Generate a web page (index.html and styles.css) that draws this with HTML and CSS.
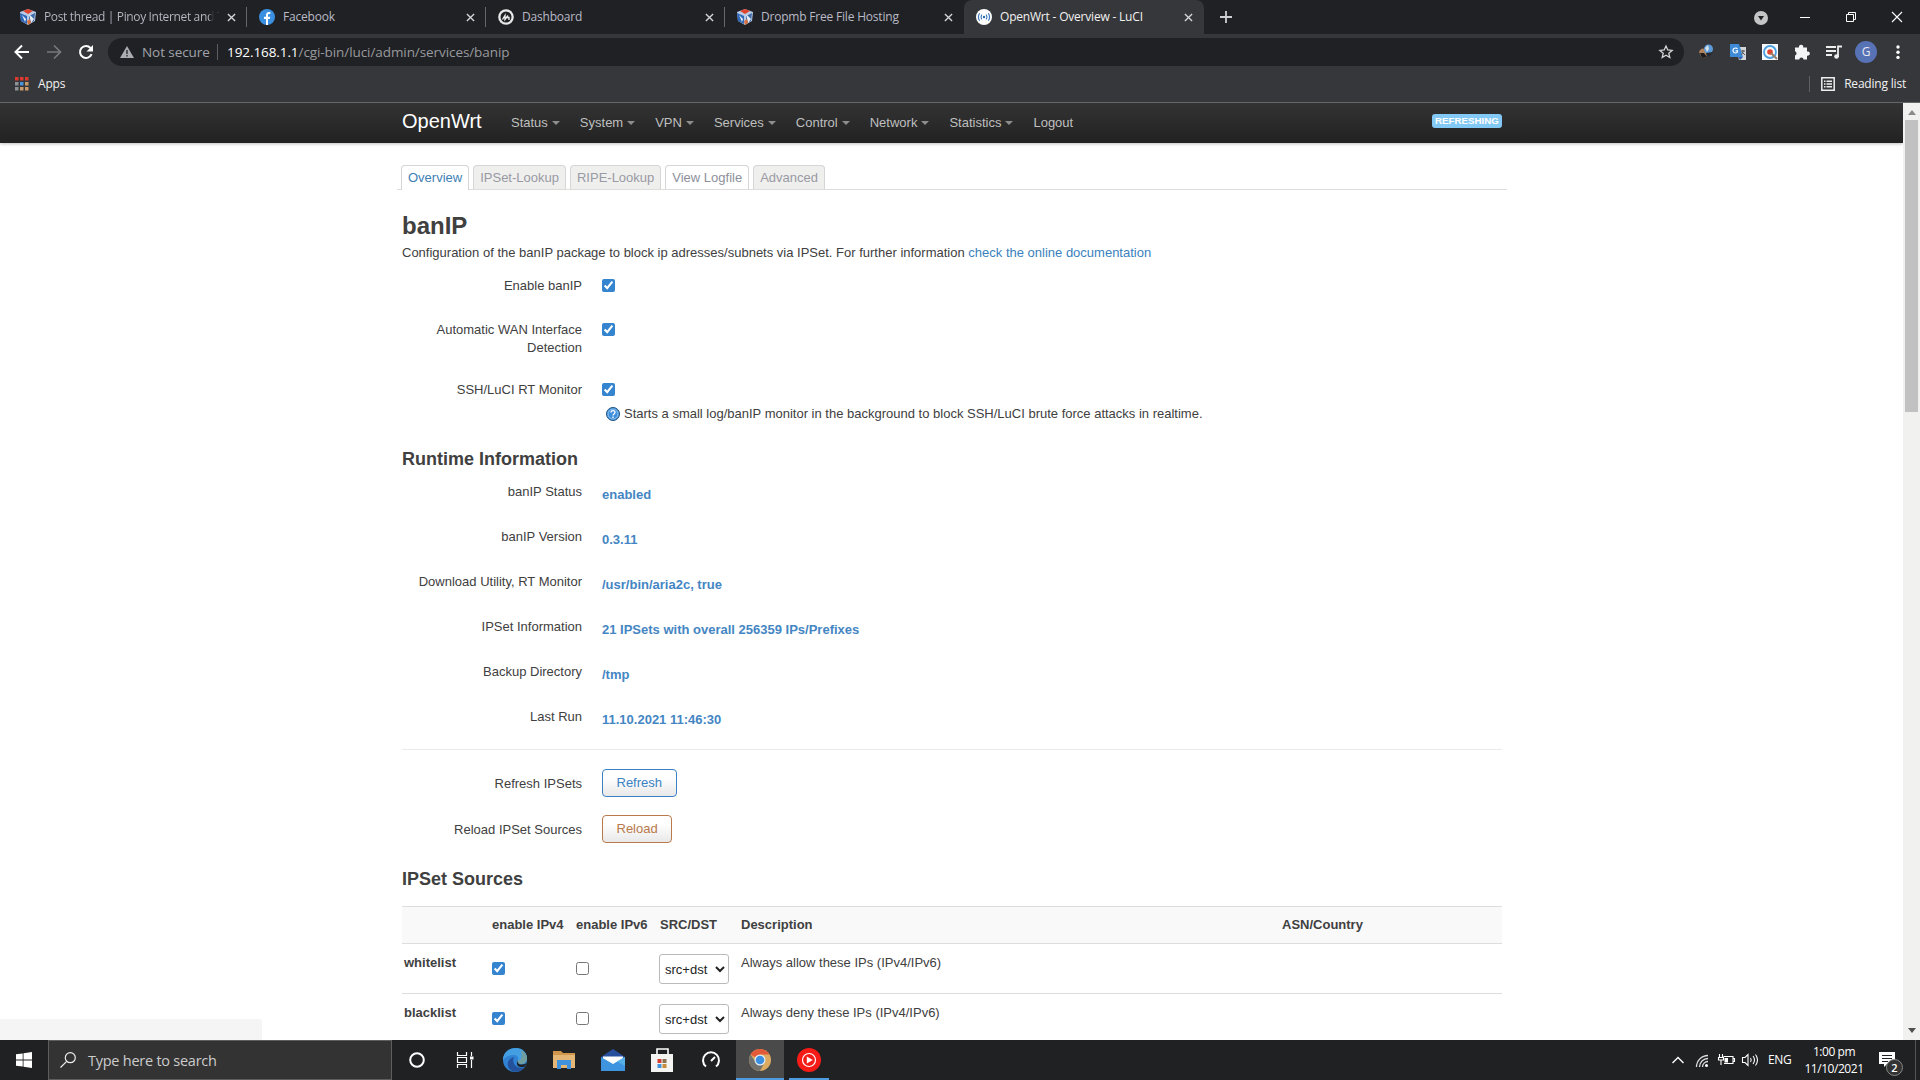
FILE: index.html
```html
<!DOCTYPE html>
<html lang="en">
<head>
    <meta charset="UTF-8">
    <title>OpenWrt - Overview - LuCI</title>
    <link rel="stylesheet" href="styles.css">
</head>
<body>
    <svg width="0" height="0" class="defs">
        <symbol id="x" viewBox="0 0 10 10"><path d="M1 1l8 8M9 1l-8 8" stroke="currentColor" stroke-width="1.5" fill="none"/></symbol>
        <symbol id="cube" viewBox="0 0 16 16">
            <path d="M8 0l8 3-1 9-7 4-7-4-1-9z" fill="#b9cbe6"/>
            <path d="M3 2l5-2 5 2-5 3z" fill="#e2432c"/>
            <path d="M0 4l7 3v8l-6-3z" fill="#2e68b8"/>
            <path d="M9 7l6-3-1 8-5 3z" fill="#3d6ca9"/>
            <path d="M2 6l4 4-1 3zM9 5l5 5-3 4z" fill="#e8eef5"/>
            <path d="M7 12l3-2 1 4-3 2z" fill="#d9713f"/>
        </symbol>
    </svg>

    <div class="tabstrip">
        <div class="tab">
            <svg class="favicon"><use href="#cube"/></svg>
            <span class="tab-title faded">Post thread | Pinoy Internet and T</span>
            <svg class="close"><use href="#x"/></svg>
        </div>
        <div class="tab">
            <svg class="favicon" viewBox="0 0 16 16"><circle cx="8" cy="8" r="8" fill="#3b8fe0"/><path d="M7 16v-6H5V7.700h2V6c0-2 1.200-3 3-3l1.300.1v2h-1C9.300 5.100 9 5.600 9 6.300v1.400h2.200L10.900 10H9v6z" fill="#fff"/></svg>
            <span class="tab-title">Facebook</span>
            <svg class="close"><use href="#x"/></svg>
        </div>
        <div class="tab">
            <svg class="favicon" viewBox="0 0 16 16"><circle cx="8" cy="8" r="7.800" fill="#e8e8e8"/><circle cx="8" cy="8" r="5.500" fill="#202124"/><path d="M4.500 10.500l2.500-4v4l3-4M8.500 8.500h2.500V11" stroke="#eee" stroke-width="1.400" fill="none"/></svg>
            <span class="tab-title">Dashboard</span>
            <svg class="close"><use href="#x"/></svg>
        </div>
        <div class="tab last">
            <svg class="favicon"><use href="#cube"/></svg>
            <span class="tab-title">Dropmb Free File Hosting</span>
            <svg class="close"><use href="#x"/></svg>
        </div>
        <div class="tab active">
            <svg class="favicon" viewBox="0 0 16 16"><circle cx="8" cy="8" r="8" fill="#fff"/><circle cx="8" cy="8" r="1.200" fill="#2c6aa8"/><path d="M5.800 5.500q-1.600 2.500 0 5M10.200 5.500q1.600 2.500 0 5M3.600 4.200q-2.400 3.800 0 7.600M12.400 4.200q2.400 3.800 0 7.600" stroke="#3f7cc0" stroke-width="1.200" fill="none"/></svg>
            <span class="tab-title">OpenWrt - Overview - LuCI</span>
            <svg class="close"><use href="#x"/></svg>
        </div>
        <svg class="new-tab" viewBox="0 0 12 12"><path d="M6 0v12M0 6h12" stroke="#d0d0d2" stroke-width="1.800"/></svg>
        <div class="window-buttons">
            <svg class="tab-search" viewBox="0 0 14 14"><circle cx="7" cy="7" r="7" fill="#c4c5c7"/><path d="M4 5h6L7 9.500z" fill="#202124"/></svg>
            <svg viewBox="0 0 10 10"><path d="M0 5.500h10" stroke="#fff"/></svg>
            <svg viewBox="0 0 10 10"><path d="M.5 2.500h7v7h-7zM2.500 2.500v-2h7v7h-2" stroke="#fff" fill="none"/></svg>
            <svg viewBox="0 0 10 10"><path d="M0 0l10 10M10 0L0 10" stroke="#fff" stroke-width="1.100"/></svg>
        </div>
    </div>

    <div class="toolbar">
        <div class="nav-buttons">
            <svg viewBox="0 0 16 16"><path d="M15 8H2M8 1.500L1.500 8 8 14.500" stroke="#fff" stroke-width="2" fill="none"/></svg>
            <svg viewBox="0 0 16 16"><path d="M1 8h13M8 1.500L14.500 8 8 14.500" stroke="#77797c" stroke-width="1.700" fill="none"/></svg>
            <svg viewBox="0 0 16 16"><path d="M13.600 10.200A6 6 0 1 1 12.500 4" stroke="#fff" stroke-width="2" fill="none"/><path d="M15 1v6.500H8.500z" fill="#fff"/></svg>
        </div>
        <div class="omnibox">
            <svg class="warning" viewBox="0 0 14 12"><path d="M7 0l7 12H0z" fill="#a9acb1"/><path d="M7 4v4M7 9v1.500" stroke="#202124" stroke-width="1.300"/></svg>
            <span class="not-secure">Not secure</span>
            <span class="url"><b>192.168.1.1</b>/cgi-bin/luci/admin/services/banip</span>
            <svg class="star" viewBox="0 0 14 14"><path d="M7 1l1.800 4 4.300.4-3.300 2.900 1 4.200L7 10.300l-3.800 2.200 1-4.200L.9 5.400 5.200 5z" stroke="#d5d6d8" stroke-width="1.300" fill="none"/></svg>
        </div>
        <div class="extensions">
            <svg viewBox="0 0 16 16"><path d="M1 8q2-5 6-3l4 5-2 3-5 1z" fill="#b1825a"/><path d="M2 9l4 0 3 4-5 1z" fill="#1c1c1e"/><circle cx="10.500" cy="5" r="4.500" fill="#5c9bd8"/><path d="M7 4l3-3 1 4-2 3z" fill="#d4e1ea"/><path d="M8 9l7-1-2 3-4 2z" fill="#262b33"/></svg>
            <svg viewBox="0 0 16 16"><path d="M6 3h10v13H9z" fill="#d2d5d8"/><path d="M0 0h9l4 13H0z" fill="#3d8ad8"/><path d="M8.500 13H13l-3 3z" fill="#2c5da8"/><path d="M7.500 5A2.500 2.500 0 1 0 7.500 8V6.800H5.500" stroke="#fff" stroke-width="1.200" fill="none"/><path d="M11 7h4M13 6v1c0 2-1 3-2 4M12 8l3 3" stroke="#555" fill="none"/></svg>
            <svg viewBox="0 0 16 16"><path d="M0 0h16v16H0z" fill="#f5f9fc"/><circle cx="8" cy="8" r="6" fill="none" stroke="#4b9fe0" stroke-width="1.800"/><circle cx="8" cy="8" r="2.800" fill="#df4430"/><path d="M9 9l6 6" stroke="#9b7b61" stroke-width="2"/></svg>
            <svg viewBox="0 0 16 16"><path d="M1 3.500h4a2.200 2.200 0 1 1 4.200 0H13v4a2.200 2.200 0 1 1 0 4.200V15.500H9.500a2 2 0 0 0-4.200 0H1v-4a2.200 2.200 0 0 0 0-4.200z" fill="#f4f5f6"/></svg>
            <svg viewBox="0 0 16 16"><path d="M0 3h10M0 7h10M0 11h6" stroke="#eee" stroke-width="1.800"/><path d="M12 13V2.500h4" stroke="#eee" stroke-width="1.800" fill="none"/><circle cx="10.500" cy="12.500" r="2.300" fill="#eee"/></svg>
            <span class="avatar">G</span>
            <svg viewBox="0 0 16 16"><circle cx="8" cy="3" r="1.700" fill="#fff"/><circle cx="8" cy="8.200" r="1.700" fill="#fff"/><circle cx="8" cy="13.400" r="1.700" fill="#fff"/></svg>
        </div>
    </div>

    <div class="bookmarks">
        <svg class="apps-icon" viewBox="0 0 14 14"><path d="M0 0h3.500v3.500H0zM5 0h3.500v3.500H5zM10 0h3.500v3.500H10z" fill="#dc3a2f"/><path d="M0 5h3.500v3.500H0zM0 10h3.500v3.500H0z" fill="#8d9296"/><path d="M5 5h3.500v3.500H5z" fill="#4a94dc"/><path d="M10 5h3.500v3.500H10zM5 10h3.500v3.500H5zM10 10h3.500v3.500H10z" fill="#c99a6a"/></svg>
        <span class="apps-label">Apps</span>
        <div class="reading-list">
            <svg viewBox="0 0 14 14"><path d="M.8.8h12.400v12.400H.8z" stroke="#eee" stroke-width="1.500" fill="none"/><path d="M3 4.200h1.500M3 7h1.500M3 9.800h1.500M5.500 4.200H11M5.500 7H11M5.500 9.800H11" stroke="#eee" stroke-width="1.600"/></svg>
            <span>Reading list</span>
        </div>
    </div>

    <div class="viewport">
        <div class="page">
            <header>
                <div class="container">
                    <a class="brand">OpenWrt</a>
                    <ul class="nav">
                        <li class="dropdown">Status</li>
                        <li class="dropdown">System</li>
                        <li class="dropdown">VPN</li>
                        <li class="dropdown">Services</li>
                        <li class="dropdown">Control</li>
                        <li class="dropdown">Network</li>
                        <li class="dropdown">Statistics</li>
                        <li>Logout</li>
                    </ul>
                    <span class="indicator">REFRESHING</span>
                </div>
            </header>

            <div class="container main">
                <ul class="page-tabs">
                    <li class="current">Overview</li>
                    <li>IPSet-Lookup</li>
                    <li>RIPE-Lookup</li>
                    <li class="hover">View Logfile</li>
                    <li>Advanced</li>
                </ul>

                <h2>banIP</h2>
                <p>Configuration of the banIP package to block ip adresses/subnets via IPSet. For further information <a class="link">check the online documentation</a></p>

                <div class="section options">
                    <div class="field">
                        <label>Enable banIP</label>
                        <div><input type="checkbox" checked></div>
                    </div>
                    <div class="field double">
                        <label>Automatic WAN Interface Detection</label>
                        <div><input type="checkbox" checked></div>
                    </div>
                    <div class="field last">
                        <label>SSH/LuCI RT Monitor</label>
                        <div>
                            <input type="checkbox" checked>
                            <div class="help">
                                <svg viewBox="0 0 14 14"><circle cx="7" cy="7" r="6.500" fill="#3f8fdc" stroke="#23507f"/><circle cx="7" cy="7" r="5" fill="none" stroke="#9fd0f5" stroke-width=".8"/><path d="M5 5.500c0-2.500 4-2.500 4 0C9 7 7 7 7 8.500M7 9.500V11" stroke="#fff" stroke-width="1.300" fill="none"/></svg>
                                Starts a small log/banIP monitor in the background to block SSH/LuCI brute force attacks in realtime.
                            </div>
                        </div>
                    </div>
                </div>

                <h3>Runtime Information</h3>
                <div class="section runtime">
                    <div class="field"><label>banIP Status</label><span>enabled</span></div>
                    <div class="field"><label>banIP Version</label><span>0.3.11</span></div>
                    <div class="field"><label>Download Utility, RT Monitor</label><span>/usr/bin/aria2c, true</span></div>
                    <div class="field"><label>IPSet Information</label><span>21 IPSets with overall 256359 IPs/Prefixes</span></div>
                    <div class="field"><label>Backup Directory</label><span>/tmp</span></div>
                    <div class="field"><label>Last Run</label><span>11.10.2021 11:46:30</span></div>
                </div>
                <hr>
                <div class="section actions">
                    <div class="field"><label>Refresh IPSets</label><button class="btn apply">Refresh</button></div>
                    <div class="field"><label>Reload IPSet Sources</label><button class="btn reload">Reload</button></div>
                </div>

                <h3>IPSet Sources</h3>
                <table>
                    <tr class="titles">
                        <th class="c-name"></th>
                        <th class="c-v4">enable IPv4</th>
                        <th class="c-v6">enable IPv6</th>
                        <th class="c-src">SRC/DST</th>
                        <th class="c-desc">Description</th>
                        <th>ASN/Country</th>
                    </tr>
                    <tr>
                        <td><b>whitelist</b></td>
                        <td><input type="checkbox" checked></td>
                        <td><input type="checkbox"></td>
                        <td class="src"><select><option>src+dst</option></select></td>
                        <td>Always allow these IPs (IPv4/IPv6)</td>
                        <td></td>
                    </tr>
                    <tr>
                        <td><b>blacklist</b></td>
                        <td><input type="checkbox" checked></td>
                        <td><input type="checkbox"></td>
                        <td class="src"><select><option>src+dst</option></select></td>
                        <td>Always deny these IPs (IPv4/IPv6)</td>
                        <td></td>
                    </tr>
                </table>
            </div>
            <div class="status-bubble"></div>
        </div>
        <div class="scrollbar">
            <svg viewBox="0 0 8 5"><path d="M0 5h8L4 0z" fill="#8b8b8b"/></svg>
            <div class="thumb"></div>
            <svg viewBox="0 0 8 5"><path d="M0 0h8L4 5z" fill="#505050"/></svg>
        </div>
    </div>

    <div class="taskbar">
        <div class="start"><svg viewBox="0 0 16 16"><path d="M0 2.300l6.700-.9v6.100H0zM7.500 1.200L16 0v7.500H7.500zM0 8.400h6.700v6.200L0 13.700zM7.500 8.400H16V16l-8.500-1.200z" fill="#fff"/></svg></div>
        <div class="search">
            <svg viewBox="0 0 16 16"><circle cx="10.300" cy="5.700" r="5" stroke="#eee" stroke-width="1.200" fill="none"/><path d="M6.700 9.300L.5 15.500" stroke="#eee" stroke-width="1.200"/></svg>
            <span>Type here to search</span>
        </div>
        <div class="task"><svg viewBox="0 0 24 24"><circle cx="12" cy="12" r="6.800" stroke="#fff" stroke-width="2" fill="none"/></svg></div>
        <div class="task"><svg viewBox="0 0 24 24"><path d="M3.500 4v3.500h9V4M3.500 20v-3.500h9V20M3.500 9.500h9v5h-9zM17.500 4v4M17.500 12v8" stroke="#fff" stroke-width="1.200" fill="none"/><path d="M16 8.500h3.500v3H16z" fill="#fff"/></svg></div>
        <div class="task wide"><svg viewBox="0 0 24 24"><circle cx="12" cy="12" r="12" fill="#2f83d2"/><path d="M13 0c7 0 11 5 11 10 0 4-3 6-6 6-3 0-4-2-3-4 1-3-1-5-4-5C6 7 2 9 0 12 0 5 6 0 13 0z" fill="#439fe2"/><path d="M18 2c4 2 6 5 6 8 0 4-3 6-6 6-3 0-4-2-3-4 2 1 5-1 3-10z" fill="#6f9da0"/><path d="M11 9c-3 7 3 13 11 10-5 7-15 6-17-1-1-5 2-8 6-9z" fill="#24519c"/><path d="M15 12c-1 3 1 5 4 4.500 2 0 4-1 5-2-1 2-2 3-2 4-6 2-10-1-7-6.500z" fill="#202124"/></svg></div>
        <div class="task"><svg viewBox="0 0 24 24"><path d="M1 3h8l2 2h12v15H1z" fill="#d0964c"/><path d="M1 7h22v13H1z" fill="#e5b777"/><path d="M5 12h14v9h-4v-4H9v4H5z" fill="#3f92dc"/></svg></div>
        <div class="task"><svg viewBox="0 0 24 24"><path d="M0 9l12-8 12 8v5H0z" fill="#284f9e"/><path d="M2 8.500h20v8H2z" fill="#fff"/><path d="M0 9l12 7 12-7v14H0z" fill="#3e94df"/><path d="M24 9v9l-8-4.500z" fill="#55b0e8"/></svg></div>
        <div class="task"><svg viewBox="0 0 24 24"><path d="M7 7V1h11v6" stroke="#fff" stroke-width="1.600" fill="none"/><path d="M1 6h22v18H1z" fill="#f4f4f2"/><path d="M7.500 11h4v4h-4z" fill="#d33d31"/><path d="M12.500 11h4v4h-4z" fill="#8a7350"/><path d="M7.500 16h4v4h-4z" fill="#4394dc"/><path d="M12.500 16h4v4h-4z" fill="#c88b3b"/></svg></div>
        <div class="task wide"><svg viewBox="0 0 24 24"><path d="M7 18.500a8 8 0 1 1 10 0M12 13l4-4" stroke="#fff" stroke-width="2" fill="none"/></svg></div>
        <div class="task running focused"><svg viewBox="0 0 24 24"><circle cx="12" cy="12" r="11" fill="#ddab5f"/><path d="M12 12L2.500 6.500A11 11 0 0 1 21.500 6.500H12z" fill="#e25a38"/><path d="M2.500 6.500A11 11 0 0 0 12 23l4.500-8.500H8z" fill="#71716d"/><circle cx="12" cy="12" r="5.500" fill="#e9eef1"/><circle cx="12" cy="12" r="4.300" fill="#3c8ee0"/></svg></div>
        <div class="task running"><svg viewBox="0 0 24 24"><circle cx="12" cy="12" r="12" fill="#f51c17"/><circle cx="12" cy="12" r="6.500" stroke="#fff" stroke-width="1.200" fill="none"/><path d="M9.800 8.500l6 3.500-6 3.500z" fill="#fff"/></svg></div>
        <div class="tray">
            <svg viewBox="0 0 16 16"><path d="M2.500 11L8 5.500l5.500 5.500" stroke="#fff" stroke-width="1.400" fill="none"/></svg>
            <svg viewBox="0 0 16 16"><path d="M2.500 15A11.500 11.500 0 0 1 14 3.500M5.500 15A8.500 8.500 0 0 1 14 6.500M8.500 15A5.500 5.500 0 0 1 14 9.500" stroke="#ddd" stroke-width="1.300" fill="none"/><circle cx="12.500" cy="13.500" r="1.500" fill="#fff"/></svg>
            <svg viewBox="0 0 16 16"><path d="M5.500 4.500H15v7H6M15 6.500h1.500v3H15M1.500 2v3M4.500 2v3M.5 5.500h5v2.500h-5zM3 8v5" stroke="#fff" stroke-width="1.100" fill="none"/><path d="M6.500 6h3.500v4.500H6.500z" fill="#fff"/></svg>
            <svg viewBox="0 0 16 16"><path d="M.5 5.500h2.500l3-3v11l-3-3H.5zM8.500 6q1.500 2 0 4M11 4q3 4 0 8M13.500 2.500q4 5.500 0 11" stroke="#fff" stroke-width="1.100" fill="none"/></svg>
            <span class="lang">ENG</span>
            <div class="clock"><span>1:00 pm</span><span>11/10/2021</span></div>
            <div class="notifications">
                <svg viewBox="0 0 16 16"><path d="M0 0h16v12H8l-3 3v-3H0z" fill="#fff"/><path d="M3 3.500h10M3 6.500h10M3 9.500h6" stroke="#202124" stroke-width="1.200"/></svg>
                <span class="badge">2</span>
            </div>
        </div>
    </div>
</body>
</html>
```

FILE: styles.css
```css
* {
    margin: 0;
    padding: 0;
    box-sizing: border-box;
}

body {
    width: 1920px;
    height: 1080px;
    overflow: hidden;
    display: flex;
    flex-direction: column;
    background: #fff;
    color: #404040;
    font-family: "Liberation Sans", Arial, sans-serif;
    font-size: 13px;
    line-height: 18px;
}

ul {
    list-style: none;
}

svg {
    display: block;
    flex: none;
    overflow: visible;
}

.defs {
    position: absolute;
}

/* browser window */

.tabstrip,
.toolbar,
.bookmarks,
.taskbar {
    font-family: "Open Sans", "Noto Sans", sans-serif;
    flex: none;
    display: flex;
    align-items: center;
}

.tabstrip {
    height: 34px;
    padding-left: 8px;
    background: #202124;
}

.tab {
    width: 239px;
    height: 34px;
    padding: 0 11px 0 12px;
    display: flex;
    align-items: center;
    gap: 8px;
    color: #b9bac6;
    font-size: 12px;
    letter-spacing: -0.2px;
    background: linear-gradient(#66676a, #66676a) no-repeat right center / 1px 20px;
}

.tab.last {
    background: none;
}

.tab.active {
    width: 240px;
    background: #36373a;
    border-radius: 8px 8px 0 0;
    color: #f1f1f1;
}

.favicon {
    width: 16px;
    height: 16px;
}

.tab-title {
    flex: 1;
    white-space: nowrap;
}

.faded {
    width: 0;
    letter-spacing: -0.35px;
    background: linear-gradient(90deg, #b9bac6 94%, #3a3b3f 96%);
    background-clip: text;
    color: transparent;
}

.close {
    width: 9px;
    height: 9px;
    color: #d5d5d8;
}

.new-tab {
    width: 12px;
    height: 12px;
    margin-left: 16px;
}

.window-buttons {
    margin-left: auto;
    height: 28px;
    padding-right: 18px;
    display: flex;
    align-items: center;
    gap: 36px;
}

.window-buttons svg {
    width: 10px;
    height: 10px;
}

.window-buttons .tab-search {
    width: 14px;
    height: 14px;
    margin-top: 2px;
    margin-right: -4px;
}

.toolbar {
    height: 36px;
    padding: 0 14px;
    background: #36373a;
}

.nav-buttons {
    width: 94px;
    display: flex;
    gap: 16px;
}

.nav-buttons svg,
.extensions svg {
    width: 16px;
    height: 16px;
}

.omnibox {
    width: 1576px;
    height: 28px;
    padding: 0 11px 0 12px;
    border-radius: 14px;
    background: #202124;
    display: flex;
    align-items: center;
    font-size: 13.5px;
    letter-spacing: -0.08px;
}

.warning {
    width: 14px;
    height: 12px;
}

.not-secure {
    width: 76px;
    margin-left: 8px;
    color: #a0a1aa;
    border-right: 1px solid #5c5d60;
    line-height: 16px;
    white-space: nowrap;
}

.url {
    margin-left: 9px;
    color: #98999e;
}

.url b {
    font-weight: 400;
    color: #fff;
}

.star {
    width: 14px;
    height: 14px;
    margin-left: auto;
}

.extensions {
    display: flex;
    align-items: center;
    gap: 16px;
    margin-left: 14px;
}

.avatar {
    width: 22px;
    height: 22px;
    margin: 0 -3px;
    border-radius: 50%;
    background: #5873b5;
    color: #e6e9f3;
    text-align: center;
    line-height: 22px;
    font-size: 12px;
}

.bookmarks {
    height: 33px;
    padding: 0 14px 5px 15px;
    border-bottom: 1px solid #666769;
    background: #36373a;
    color: #f2f2f2;
    font-size: 12px;
    letter-spacing: -0.2px;
}

.apps-icon {
    width: 14px;
    height: 14px;
    margin-right: 9px;
}

.reading-list {
    margin-left: auto;
    display: flex;
    align-items: center;
    gap: 9px;
    height: 16px;
    border-left: 1px solid #5f6063;
    padding-left: 11px;
}

.reading-list svg {
    width: 14px;
    height: 14px;
}

/* LuCI page */

.viewport {
    flex: 1;
    min-height: 0;
    display: flex;
    overflow: hidden;
}

.page {
    flex: 1;
    position: relative;
    overflow: hidden;
}

header {
    height: 40px;
    background: linear-gradient(#333, #222);
    box-shadow: 0 1px 3px rgba(0, 0, 0, 0.25);
}

.container {
    width: 1100px;
    margin: 0 auto 0 402px;
    position: relative;
}

header .container {
    height: 40px;
    display: flex;
    align-items: center;
}

.brand {
    width: 109px;
    color: #fff;
    font-size: 20px;
    line-height: 20px;
    padding-bottom: 5px;
}

.nav {
    display: flex;
    gap: 20px;
    color: #bfbfbf;
}

.dropdown::after {
    content: "";
    display: inline-block;
    margin-left: 4px;
    vertical-align: 2px;
    border: 4px solid transparent;
    border-top-color: #8d8d8d;
    border-bottom: 0;
}

.indicator {
    width: 70px;
    height: 14px;
    margin-left: auto;
    margin-bottom: 4px;
    border-radius: 3px;
    background: #82c9f5;
    color: #fff;
    font-size: 9.750px;
    font-weight: bold;
    line-height: 14px;
    text-align: center;
}

.main {
    padding-top: 22px;
}

.page-tabs {
    display: flex;
    gap: 4px;
    margin: 0 -5px 18px -5px;
    padding-left: 4px;
    border-bottom: 1px solid #ddd;
    height: 25px;
}

.page-tabs li {
    height: 24px;
    padding: 0 6px;
    border: 1px solid #d6d6d6;
    border-bottom: 0;
    border-radius: 4px 4px 0 0;
    background: #efefee;
    color: #999aa3;
    line-height: 24px;
}

.page-tabs .current {
    height: 25px;
    background: #fff;
    color: #3e7fb5;
}

.page-tabs .hover {
    background: #fff;
    color: #8d8f9b;
}

h2,
h3 {
    line-height: 36px;
    color: #404040;
}

h2 {
    font-size: 24px;
}

h3 {
    font-size: 18px;
}

.link {
    color: #3a7fbd;
}

.field {
    display: grid;
    grid-template-columns: 180px 1fr;
    column-gap: 20px;
    align-items: start;
    justify-items: start;
}

.field label {
    width: 180px;
    text-align: right;
}

input[type="checkbox"] {
    display: block;
    width: 13px;
    height: 13px;
    margin: 2px 0 0 0;
    accent-color: #3584cf;
}

.options {
    height: 179px;
    padding-top: 15px;
}

.options .field {
    height: 44px;
}

.options .double {
    height: 60px;
}

.help {
    display: flex;
    gap: 4px;
    margin-top: 9px;
    padding-left: 4px;
}

.help svg {
    width: 14px;
    height: 14px;
    margin-top: 2px;
}

.runtime {
    height: 272px;
    padding-top: 6px;
}

.runtime .field {
    height: 45px;
}

.runtime span {
    padding-top: 3px;
    color: #4486c3;
    font-weight: bold;
}

hr {
    border: 0;
    border-top: 1px solid #eaeaea;
}

.actions {
    height: 111px;
    padding-top: 19px;
}

.actions .field {
    height: 46px;
}

.actions label {
    padding-top: 6px;
}

.btn {
    height: 28px;
    padding: 0 13.500px 1px;
    border: 1px solid;
    border-radius: 4px;
    background: linear-gradient(#fff 30%, #e8e8e8);
    font: 13px/18px "Liberation Sans", Arial, sans-serif;
}

.apply {
    color: #3a82c4;
}

.reload {
    color: #b97a4b;
}

table {
    width: 1100px;
    margin-top: 9px;
    border-collapse: collapse;
    table-layout: fixed;
    text-align: left;
}

tr {
    height: 50px;
    border-top: 1px solid #ddd;
    vertical-align: top;
}

.titles {
    height: 37px;
    background: #f9f9f9;
}

th,
td {
    padding: 10px 0 0 2px;
}

th {
    padding-top: 9px;
}

.titles th {
    vertical-align: top;
}

.c-name { width: 88px; }
.c-v4 { width: 84px; }
.c-v6 { width: 84px; }
.c-src { width: 81px; }
.c-desc { width: 541px; }

td input[type="checkbox"] {
    margin: 8px 0 0 0;
}

select {
    display: block;
    width: 70px;
    height: 30px;
    padding: 0 1px;
    border: 1px solid #bbb;
    border-radius: 3px;
    background: #fff;
    color: #222;
    font: 13px "Liberation Sans", Arial, sans-serif;
}

td.src {
    padding-left: 1px;
}

.status-bubble {
    position: absolute;
    left: 0;
    bottom: 0;
    width: 262px;
    height: 21px;
    border-radius: 0 3px 0 0;
    background: #f5f5f5;
}

.scrollbar {
    width: 17px;
    padding: 7px 0;
    background: #f1f1f0;
    display: flex;
    flex-direction: column;
    align-items: center;
}

.scrollbar svg {
    width: 8px;
    height: 5px;
}

.thumb {
    width: 13px;
    height: 292px;
    margin: 5px 0 auto;
    background: #c1c1c1;
}

/* Windows taskbar */

.taskbar {
    height: 40px;
    background: #202123;
    color: #fff;
}

.start {
    width: 48px;
    padding-left: 16px;
}

.start svg,
.search svg,
.tray svg {
    width: 16px;
    height: 16px;
}

.search {
    width: 344px;
    height: 40px;
    padding-left: 11px;
    border: 1px solid #5e5e5e;
    background: #333;
    display: flex;
    align-items: center;
    gap: 12px;
    color: #ccc;
    font-size: 14.500px;
    letter-spacing: -0.250px;
}

.search span {
    padding-top: 2px;
}

.task {
    width: 49px;
    height: 40px;
    display: flex;
    align-items: center;
    justify-content: center;
}

.task.wide {
    width: 49.500px;
}

.task svg {
    width: 24px;
    height: 24px;
}

.running {
    border-bottom: 2px solid #4d9be0;
    padding-top: 2px;
}

.running:not(.focused) {
    width: 40px;
    margin-left: 5px;
}

.focused {
    width: 48px;
    background: #4a4a4a;
}

.tray {
    margin-left: auto;
    display: flex;
    align-items: center;
    height: 40px;
    gap: 8px;
    padding-right: 20px;
    margin-right: 4px;
    border-right: 1px solid #555;
}

.lang {
    width: 25px;
    margin-left: 2px;
    font-size: 12px;
    letter-spacing: -0.3px;
}

.clock {
    width: 66px;
    display: flex;
    flex-direction: column;
    align-items: center;
    font-size: 12px;
    line-height: 17px;
    letter-spacing: -0.450px;
    padding-bottom: 1px;
}

.notifications {
    position: relative;
    margin-left: 4px;
}

.badge {
    position: absolute;
    left: 7px;
    top: 7px;
    width: 17px;
    height: 17px;
    border: 1px solid #888;
    border-radius: 50%;
    background: #333;
    font-size: 11px;
    font-weight: 600;
    line-height: 15px;
    text-align: center;
}
```
